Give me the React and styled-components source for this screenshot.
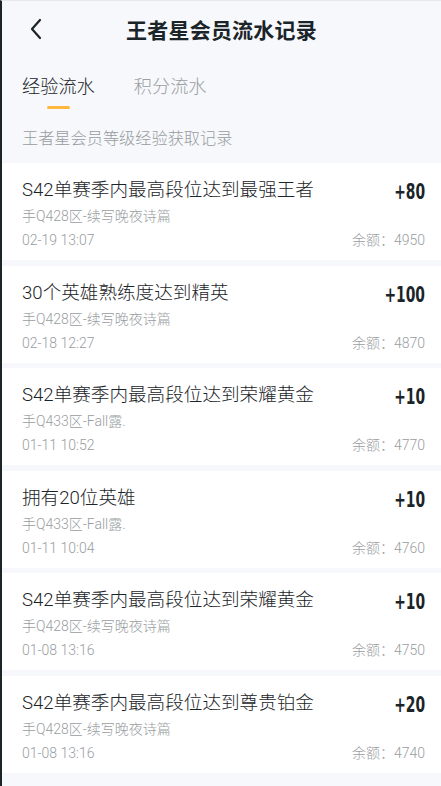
import React, { useState } from "react";
import styled, { createGlobalStyle } from "styled-components";

const GlobalStyle = createGlobalStyle`
  html, body {
    margin: 0;
    padding: 0;
    background: #f6f8fb;
  }
  body {
    font-family: "Roboto", "Noto Sans CJK SC", sans-serif;
  }
`;

const records = [
  { title: "S42单赛季内最高段位达到最强王者", zone: "手Q428区-续写晚夜诗篇", time: "02-19 13:07", delta: 80, balance: 4950 },
  { title: "30个英雄熟练度达到精英", zone: "手Q428区-续写晚夜诗篇", time: "02-18 12:27", delta: 100, balance: 4870 },
  { title: "S42单赛季内最高段位达到荣耀黄金", zone: "手Q433区-Fall露.", time: "01-11 10:52", delta: 10, balance: 4770 },
  { title: "拥有20位英雄", zone: "手Q433区-Fall露.", time: "01-11 10:04", delta: 10, balance: 4760 },
  { title: "S42单赛季内最高段位达到荣耀黄金", zone: "手Q428区-续写晚夜诗篇", time: "01-08 13:16", delta: 10, balance: 4750 },
  { title: "S42单赛季内最高段位达到尊贵铂金", zone: "手Q428区-续写晚夜诗篇", time: "01-08 13:16", delta: 20, balance: 4740 },
];

const Page = styled.div`
  min-height: 786px;
  box-sizing: border-box;
  border-left: 2px solid #1d2427;
  border-top: 1px solid #e6e8eb;
  background: #f6f8fb;
  overflow: hidden;
`;

const Header = styled.div`
  height: 55px;
  display: flex;
  align-items: center;
  justify-content: center;
  position: relative;
`;

const Back = styled.button`
  position: absolute;
  left: 22px;
  top: 15px;
  width: 24px;
  height: 26px;
  padding: 0;
  border: none;
  background: none;
  display: flex;
  align-items: center;
  justify-content: center;
`;

const Title = styled.h1`
  margin: 0;
  font-family: "Noto Sans CJK SC", sans-serif;
  font-size: 21px;
  font-weight: 700;
  color: #1b2428;
  letter-spacing: 0.2px;
`;

const Tabs = styled.div`
  display: flex;
  gap: 39px;
  padding: 18px 0 0 20px;
`;

const Tab = styled.div`
  display: flex;
  flex-direction: column;
  align-items: center;
  gap: 6px;
  font-size: 18.2px;
  font-weight: 300;
  line-height: 26px;
  color: ${(p) => (p.$active ? "#1b2428" : "#9a9ea2")};
  cursor: pointer;

  &::after {
    content: "";
    width: 23px;
    height: 3px;
    border-radius: 2px;
    background: ${(p) => (p.$active ? "#ffb73d" : "transparent")};
  }
`;

const Hint = styled.div`
  margin: 19px 0 13px 20px;
  font-size: 16.2px;
  font-weight: 300;
  line-height: 22px;
  color: #989ca0;
`;

const List = styled.div`
  display: flex;
  flex-direction: column;
  gap: 5.6px;
`;

const Card = styled.div`
  background: #ffffff;
  height: 97px;
  box-sizing: border-box;
  padding: 14px 16px 0 20px;
  display: grid;
  grid-template-columns: 1fr auto;
  grid-template-rows: 26px 22px 22px;
  row-gap: 2px;
`;

const ItemTitle = styled.div`
  font-size: 18.6px;
  font-weight: 300;
  line-height: 26px;
  color: #1b2428;
  white-space: nowrap;
`;

const Delta = styled.div`
  justify-self: end;
  font-family: "DejaVu Sans Condensed", "DejaVu Sans", sans-serif;
  font-weight: 700;
  font-size: 22px;
  line-height: 26px;
  color: #1b2428;
  transform: scaleX(0.7);
  transform-origin: right center;
  margin-top: 2px;
`;

const Meta = styled.div`
  font-size: 14px;
  font-weight: 300;
  line-height: 22px;
  color: #999da1;
  grid-column: ${(p) => (p.$right ? "2" : "1")};
  text-align: ${(p) => (p.$right ? "right" : "left")};
`;

const Zone = styled(Meta)`
  grid-column: 1 / 3;
`;

export default function App() {
  const [tab, setTab] = useState(0);

  return (
    <Page>
      <GlobalStyle />
      <Header>
        <Back>
          <svg width="14" height="22" viewBox="0 0 14 22">
            <polyline points="11,2 3,11 11,20" fill="none" stroke="#1b2428" strokeWidth="2.2" strokeLinecap="round" strokeLinejoin="round" />
          </svg>
        </Back>
        <Title>王者星会员流水记录</Title>
      </Header>
      <Tabs>
        <Tab $active={tab === 0} onClick={() => setTab(0)}>经验流水</Tab>
        <Tab $active={tab === 1} onClick={() => setTab(1)}>积分流水</Tab>
      </Tabs>
      <Hint>王者星会员等级经验获取记录</Hint>
      <List>
        {records.map((r, i) => (
          <Card key={i}>
            <ItemTitle>{r.title}</ItemTitle>
            <Delta>+{r.delta}</Delta>
            <Zone>{r.zone}</Zone>
            <Meta>{r.time}</Meta>
            <Meta $right>余额：{r.balance}</Meta>
          </Card>
        ))}
      </List>
    </Page>
  );
}
